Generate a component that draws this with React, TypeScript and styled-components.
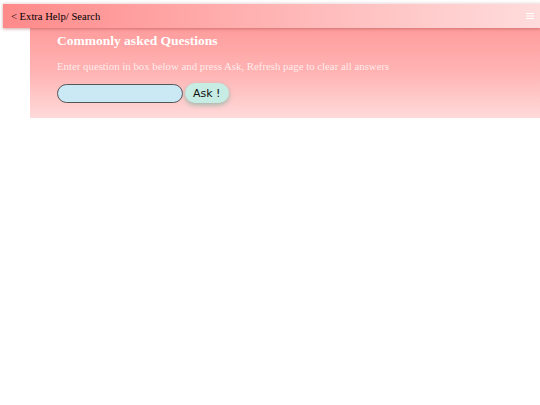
import React from "react";
import styled, { createGlobalStyle } from "styled-components";

const GlobalStyle = createGlobalStyle`
    html, body {
        margin: 0;
        padding: 0;
        background: #ffffff;
    }
    body {
        font-family: "Liberation Serif", "Times New Roman", serif;
    }
`;

const Page = styled.div`
    display: flex;
    flex-direction: column;
    padding-top: 3px;
`;

const TopBar = styled.header`
    display: flex;
    align-items: center;
    justify-content: space-between;
    height: 24px;
    margin-left: 3px;
    padding: 0 6px 0 8px;
    background: linear-gradient(to right, #ff8a8a, #ffb0b0 45%, #ffdcdc);
    border-top: 1px solid #f4e6e6;
    box-shadow: 0 1px 3px rgba(150, 60, 60, 0.45);
    position: relative;
    z-index: 1;
`;

const BackLink = styled.span`
    font-size: 10.6px;
    color: #000;
`;

const MenuIcon = styled.svg`
    width: 8px;
    height: 8px;
`;

const Panel = styled.section`
    display: flex;
    flex-direction: column;
    margin-left: 30px;
    padding: 5px 27px 15px;
    background: linear-gradient(to bottom, #ff9c9c, #ffb4b4 50%, #ffdada);
`;

const Title = styled.h2`
    margin: 0;
    font-size: 13.5px;
    font-weight: bold;
    color: #fff;
    line-height: 16px;
`;

const Hint = styled.p`
    margin: 10px 0 0;
    font-size: 10.8px;
    color: rgba(255, 255, 255, 0.78);
    line-height: 14px;
`;

const AskRow = styled.form`
    display: flex;
    align-items: center;
    gap: 2px;
    margin-top: 10px;
`;

const QuestionInput = styled.input`
    box-sizing: border-box;
    width: 126px;
    height: 19px;
    border: 1px solid #555;
    border-radius: 10px;
    background: #cbe8f5;
    outline: none;
`;

const AskButton = styled.button`
    box-sizing: border-box;
    height: 20px;
    padding: 0 8px;
    border: none;
    border-radius: 10px;
    background: #c6ece4;
    box-shadow: 0 2px 5px rgba(90, 170, 150, 0.6);
    font-family: "DejaVu Sans", Verdana, sans-serif;
    font-size: 11px;
    color: #111;
    cursor: pointer;
`;

export default function App() {
    return (
        <>
            <GlobalStyle />
            <Page>
                <TopBar>
                    <BackLink>&lt; Extra Help/ Search</BackLink>
                    <MenuIcon viewBox="0 0 8 8">
                        <path d="M0 1.5h8M0 4h8M0 6.5h8" stroke="#fff" strokeWidth="1" />
                    </MenuIcon>
                </TopBar>
                <Panel>
                    <Title>Commonly asked Questions</Title>
                    <Hint>Enter question in box below and press Ask, Refresh page to clear all answers</Hint>
                    <AskRow onSubmit={(e) => e.preventDefault()}>
                        <QuestionInput type="text" />
                        <AskButton type="submit">Ask !</AskButton>
                    </AskRow>
                </Panel>
            </Page>
        </>
    );
}
